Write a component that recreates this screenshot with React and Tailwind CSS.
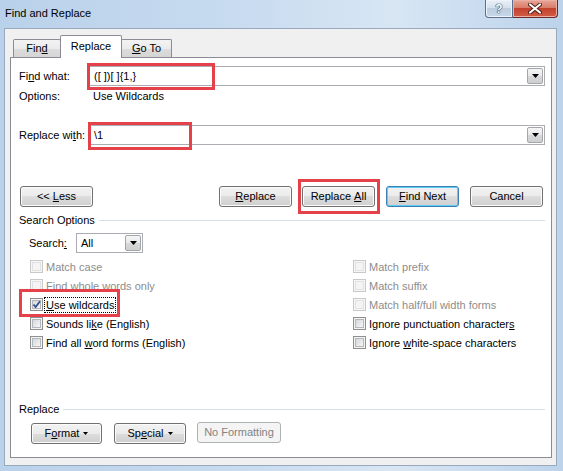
import React from 'react';

const Arrow = () => (
  <svg width="7" height="4" viewBox="0 0 7 4">
    <path d="M0 0h7L3.5 4z" fill="#000" />
  </svg>
);

const SmallArrow = () => (
  <svg width="5" height="3" viewBox="0 0 5 3" className="ml-[4px]">
    <path d="M0 0h5L2.5 3z" fill="#000" />
  </svg>
);

const DropBtn = () => (
  <div className="w-[16px] h-[16px] border border-[#a3a6ab] rounded-[2px] bg-[linear-gradient(#f5f5f5,#e8e8e8_50%,#d9d9d9_50%,#cfcfcf)] flex items-center justify-center">
    <Arrow />
  </div>
);

const Combo = ({ value, className = '', children }) => (
  <div className={`relative h-[20px] border border-[#abadb3] bg-white flex items-center pl-[4px] pr-[1px] ${className}`}>
    <span className="flex-1 text-[11px] leading-none">{value}</span>
    <DropBtn />
    {children}
  </div>
);

const RedBox = ({ className }) => (
  <div className={`absolute border-[3px] border-[#e5414b] pointer-events-none ${className}`} />
);

const Btn = ({ children, className = '', kind = 'normal' }) => {
  const styles = {
    normal:
      'border-[#707070] bg-[linear-gradient(#f2f2f2,#ebebeb_50%,#dddddd_50%,#cfcfcf)] shadow-[inset_0_0_0_1px_#fbfbfb] text-black',
    default:
      'border-[#3c7fb1] bg-[linear-gradient(#f2f2f2,#ebebeb_50%,#dddddd_50%,#cfcfcf)] shadow-[inset_0_0_0_1px_#5ecdf5] text-black',
    disabled: 'border-[#adb2b5] bg-[#f4f4f4] text-[#838383]',
  };
  return (
    <div
      className={`relative h-[21px] rounded-[3px] border flex items-center justify-center text-[11px] leading-none ${styles[kind]} ${className}`}
    >
      {children}
    </div>
  );
};

const Check = ({ checked, disabled }) => (
  <div
    className={`relative w-[13px] h-[13px] border p-[1px] shrink-0 ${
      disabled ? 'border-[#c9c9c9] bg-[#f6f6f6]' : 'border-[#8e8f8f] bg-[#f4f4f4]'
    }`}
  >
    <div
      className={`w-full h-full border ${
        disabled
          ? 'border-[#e2e2e2] bg-[#f4f4f4]'
          : 'border-[#b4b8bd] bg-[linear-gradient(135deg,#d4d7db,#f6f6f6)]'
      }`}
    />
    {checked && (
      <svg width="11" height="11" viewBox="0 0 11 11" className="absolute left-[0px] top-[0px]">
        <path d="M2.5 5.5L4.6 8L9 2.2" fill="none" stroke="#36508c" strokeWidth="1.8" />
      </svg>
    )}
  </div>
);

const left = [
  { label: 'Match case', disabled: true },
  { label: 'Find whole words only', disabled: true },
  {
    label: (
      <>
        <u>U</u>se wildcards
      </>
    ),
    checked: true,
    focus: true,
    red: true,
  },
  {
    label: (
      <>
        Sounds li<u>k</u>e (English)
      </>
    ),
  },
  {
    label: (
      <>
        Find all <u>w</u>ord forms (English)
      </>
    ),
  },
];

const right = [
  { label: 'Match prefix', disabled: true },
  { label: 'Match suffix', disabled: true },
  { label: 'Match half/full width forms', disabled: true },
  {
    label: (
      <>
        Ignore punctuation character<u>s</u>
      </>
    ),
  },
  {
    label: (
      <>
        Ignore <u>w</u>hite-space characters
      </>
    ),
  },
];

const CheckRow = ({ item }) => (
  <div className="relative h-[19px] flex items-center">
    <Check checked={item.checked} disabled={item.disabled} />
    <span
      className={`ml-[1px] px-[1px] text-[11px] leading-[14px] border ${
        item.focus ? 'border-dotted border-black' : 'border-transparent'
      } ${item.disabled ? 'text-[#8d8d8d]' : 'text-black'}`}
    >
      {item.label}
    </span>
    {item.red && <RedBox className="left-[-11px] top-[-6px] w-[101px] h-[28px]" />}
  </div>
);

export default function App() {
  const rows = left.map((l, i) => [l, right[i]]);

  return (
    <div className="w-[563px] h-[471px] overflow-hidden flex flex-col bg-[linear-gradient(90deg,#b9d1ea,#c9dcf0_45%,#d8e6f4_70%,#bcd3eb)] font-['Liberation_Sans',Arial,sans-serif] text-black select-none">
      {/* title bar */}
      <div className="h-[28px] flex items-start shrink-0">
        <div className="pl-[5px] pt-[7px] text-[11px] leading-[13px] flex-1">Find and Replace</div>
        <div className="flex mr-[5px]">
          <div className="w-[28px] h-[18px] border border-t-0 border-[#5a708c] rounded-bl-[4px] bg-[linear-gradient(#e9f0f8,#d4e0ee_50%,#bccde0_50%,#c8d8ea)] shadow-[inset_0_0_0_1px_#eef4fa] flex items-center justify-center text-[12px] font-bold text-white [text-shadow:0_0_1px_#2c3a4c,0_0_1px_#2c3a4c,0_0_1px_#2c3a4c]">
            ?
          </div>
          <div className="w-[45px] h-[18px] border border-t-0 border-l-0 border-[#6b2a24] rounded-br-[4px] bg-[linear-gradient(#e8a598,#d67966_50%,#c4422d_50%,#d25c45)] shadow-[inset_0_0_0_1px_#eab0a5] flex items-center justify-center">
            <svg width="14" height="11" viewBox="0 0 14 11">
              <path d="M2 1.5L12 9.5M12 1.5L2 9.5" stroke="#4a1d17" strokeWidth="4" strokeLinecap="round" />
              <path d="M2 1.5L12 9.5M12 1.5L2 9.5" stroke="#fff" strokeWidth="2.2" strokeLinecap="round" />
            </svg>
          </div>
        </div>
      </div>

      {/* client area */}
      <div className="ml-[4px] w-[553px] h-[438px] border border-[#98a9bd] bg-[#f0f0f0] flex flex-col">
        {/* tabs */}
        <div className="h-[28px] flex items-end pl-[8px] shrink-0">
          <div className="w-[48px] h-[18px] border border-b-0 border-[#898c95] rounded-t-[2px] bg-[linear-gradient(#f3f3f3,#ebebeb_50%,#dddddd_50%,#d5d5d5)] flex items-center justify-center text-[11px] leading-none">
            Fin<u>d</u>
          </div>
          <div className="relative z-10 -ml-[1px] -mb-[1px] w-[62px] h-[23px] border border-b-0 border-[#898c95] rounded-t-[2px] bg-white flex items-start justify-center pt-[5px] text-[11px] leading-none">
            Replace
          </div>
          <div className="-ml-[1px] w-[51px] h-[18px] border border-b-0 border-[#898c95] rounded-t-[2px] bg-[linear-gradient(#f3f3f3,#ebebeb_50%,#dddddd_50%,#d5d5d5)] flex items-center justify-center text-[11px] leading-none">
            <u>G</u>o To
          </div>
        </div>

        {/* tab page */}
        <div className="ml-[5px] w-[542px] h-[401px] border border-[#898c95] bg-white flex flex-col text-[11px]">
          {/* Find what */}
          <div className="mt-[8px] h-[20px] flex items-center pl-[8px] pr-[6px]">
            <div className="w-[70px]">
              Fi<u>n</u>d what:
            </div>
            <Combo value="([ ])[ ]{1,}" className="flex-1">
              <RedBox className="left-[-3px] top-[-4px] w-[128px] h-[27px]" />
            </Combo>
          </div>

          {/* Options */}
          <div className="mt-[3px] h-[14px] flex items-center pl-[8px]">
            <div className="w-[74px]">Options:</div>
            <div>Use Wildcards</div>
          </div>

          {/* Replace with */}
          <div className="mt-[22px] h-[20px] flex items-center pl-[8px] pr-[6px]">
            <div className="w-[70px]">
              Replace wi<u>t</u>h:
            </div>
            <Combo value="\1" className="flex-1">
              <RedBox className="left-[-2px] top-[-4px] w-[104px] h-[28px]" />
            </Combo>
          </div>

          {/* Buttons */}
          <div className="mt-[41px] h-[21px] flex pl-[9px] pr-[8px]">
            <Btn className="w-[73px]">
              &lt;&lt;&nbsp;<u>L</u>ess
            </Btn>
            <div className="flex-1" />
            <Btn className="w-[73px]">
              <u>R</u>eplace
            </Btn>
            <Btn className="w-[73px] ml-[10px]">
              Replace&nbsp;<u>A</u>ll
              <RedBox className="left-[-5px] top-[-8px] w-[82px] h-[35px]" />
            </Btn>
            <Btn kind="default" className="w-[73px] ml-[11px]">
              <u>F</u>ind Next
            </Btn>
            <Btn className="w-[73px] ml-[11px]">Cancel</Btn>
          </div>

          {/* Search Options */}
          <div className="mt-[6px] h-[14px] flex items-center pl-[8px] pr-[6px]">
            <span>Search Options</span>
            <div className="flex-1 ml-[4px] h-px bg-[#d5dfe5]" />
          </div>

          {/* Search */}
          <div className="mt-[6px] h-[20px] flex items-center pl-[18px]">
            <div className="w-[47px]">
              Search<u>:</u>
            </div>
            <Combo value="All" className="w-[67px]" />
          </div>

          {/* Checkboxes */}
          <div className="mt-[4px] pl-[19px] grid grid-cols-[323px_1fr]">
            {rows.map(([l, r], i) => (
              <React.Fragment key={i}>
                <CheckRow item={l} />
                <CheckRow item={r} />
              </React.Fragment>
            ))}
          </div>

          {/* Replace section */}
          <div className="mt-[50px] h-[14px] flex items-center pl-[8px] pr-[6px]">
            <span>Replace</span>
            <div className="flex-1 ml-[4px] h-px bg-[#d5dfe5]" />
          </div>

          <div className="mt-[7px] h-[21px] flex pl-[20px]">
            <Btn className="w-[71px]">
              F<u>o</u>rmat
              <SmallArrow />
            </Btn>
            <Btn className="w-[72px] ml-[12px]">
              Sp<u>e</u>cial
              <SmallArrow />
            </Btn>
            <Btn kind="disabled" className="w-[84px] ml-[11px] -mt-[1px]">
              No Formatting
            </Btn>
          </div>
        </div>
      </div>
    </div>
  );
}
